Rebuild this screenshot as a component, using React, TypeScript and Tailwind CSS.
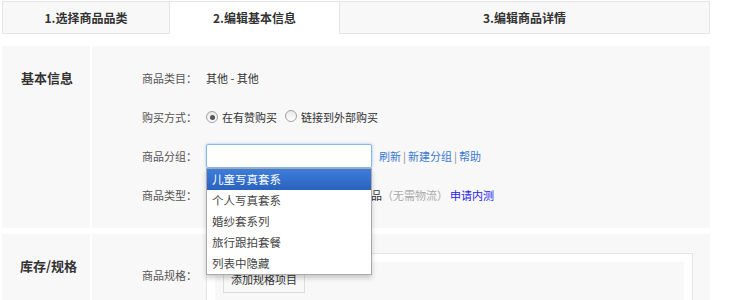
import React from 'react';

const font = { fontFamily: '"Noto Sans CJK SC", "Liberation Sans", sans-serif' };

function Radio({ checked }: { checked?: boolean }) {
    return (
        <span className="inline-flex h-[12px] w-[12px] items-center justify-center rounded-full border border-[#a0a0a0] bg-gradient-to-b from-[#e8e8e8] to-white mr-[4px] shrink-0">
            {checked && <span className="h-[5px] w-[5px] rounded-full bg-[#555]" />}
        </span>
    );
}

function Tabs() {
    return (
        <div className="flex h-[33px] w-[708px] text-[12px] font-bold text-[#333]">
            <div className="flex w-[168px] items-center justify-center border border-[#e5e5e5] bg-[#f8f8f8]">1.选择商品品类</div>
            <div className="flex w-[169px] items-center justify-center border-t border-[#e5e5e5] bg-white">2.编辑基本信息</div>
            <div className="flex flex-1 items-center justify-center border border-[#e5e5e5] bg-[#f8f8f8]">3.编辑商品详情</div>
        </div>
    );
}

const groups = ['儿童写真套系', '个人写真套系', '婚纱套系列', '旅行跟拍套餐', '列表中隐藏'];

function Row({ label, children }: { label: string; children?: React.ReactNode }) {
    return (
        <div className="flex h-[24px] items-center">
            <div className="w-[64px] text-[11px] text-[#555]">{label}</div>
            <div className="flex items-center text-[11px] text-[#333]">{children}</div>
        </div>
    );
}

export default function App() {
    return (
        <div className="h-[300px] w-[730px] overflow-hidden bg-white pl-[2px] pt-[1px]" style={font}>
            <Tabs />

            {/* 基本信息 */}
            <div className="mt-[12px] flex h-[182px] w-[708px]">
                <div className="w-[88px] bg-[#f8f8f8] pl-[19px] pt-[22px] text-[13px] font-bold leading-[20px] text-[#333]">基本信息</div>
                <div className="ml-[2px] flex flex-1 flex-col gap-[15px] bg-[#f8f8f8] pl-[50px] pt-[20px]">
                    <Row label="商品类目：">其他 - 其他</Row>
                    <Row label="购买方式：">
                        <Radio checked />
                        <span>在有赞购买</span>
                        <span className="ml-[8px]"><Radio /></span>
                        <span>链接到外部购买</span>
                    </Row>
                    <Row label="商品分组：">
                        <div className="relative">
                            <div className="h-[24px] w-[166px] rounded-[2px] border border-[#8bb8e8] bg-white shadow-[0_0_3px_rgba(82,168,236,0.6)]" />
                            <div className="absolute left-0 top-[24px] z-10 w-[166px] border border-[#aaa] bg-white shadow-[0_3px_5px_rgba(0,0,0,0.2)]">
                                {groups.map((g, i) => (
                                    <div
                                        key={g}
                                        className={
                                            i === 0
                                                ? 'flex h-[21px] items-center bg-gradient-to-b from-[#3d7ddc] to-[#2a62bc] pl-[5px] text-[11.5px] text-white'
                                                : 'flex h-[21px] items-center pl-[5px] text-[11.5px] text-[#444]'
                                        }
                                    >
                                        {g}
                                    </div>
                                ))}
                            </div>
                        </div>
                        <span className="ml-[7px] text-[#3a78d4]">刷新</span>
                        <span className="mx-[2px] text-[#888]">|</span>
                        <span className="text-[#3a78d4]">新建分组</span>
                        <span className="mx-[2px] text-[#888]">|</span>
                        <span className="text-[#3a78d4]">帮助</span>
                    </Row>
                    <Row label="商品类型：">
                        <Radio checked />
                        <span>实物商品（快递）</span>
                        <span className="ml-[12px]"><Radio /></span>
                        <span>虚拟商品</span>
                        <span className="text-[#aaa]">（无需物流）</span>
                        <span className="ml-[2px] text-[#2424f0]">申请内测</span>
                    </Row>
                </div>
            </div>

            {/* 库存/规格 */}
            <div className="mt-[6px] flex h-[80px] w-[708px]">
                <div className="w-[88px] bg-[#f8f8f8] pl-[18px] pt-[22px] text-[13px] font-bold leading-[20px] text-[#333]">库存/规格</div>
                <div className="ml-[2px] flex flex-1 bg-[#f8f8f8] pl-[50px] pt-[19px]">
                    <div className="mt-[12px] h-[20px] w-[64px] text-[11px] leading-[20px] text-[#555]">商品规格：</div>
                    <div className="w-[487px] border border-[#e5e5e5] bg-white p-[8px]">
                        <div className="h-[60px] bg-[#f8f8f8] pl-[8px] pt-[3px]">
                            <div className="flex h-[28px] w-[82px] items-center justify-center border border-[#ddd] bg-[#f8f8f8] text-[11px] text-[#333]">添加规格项目</div>
                        </div>
                    </div>
                </div>
            </div>
        </div>
    );
}
